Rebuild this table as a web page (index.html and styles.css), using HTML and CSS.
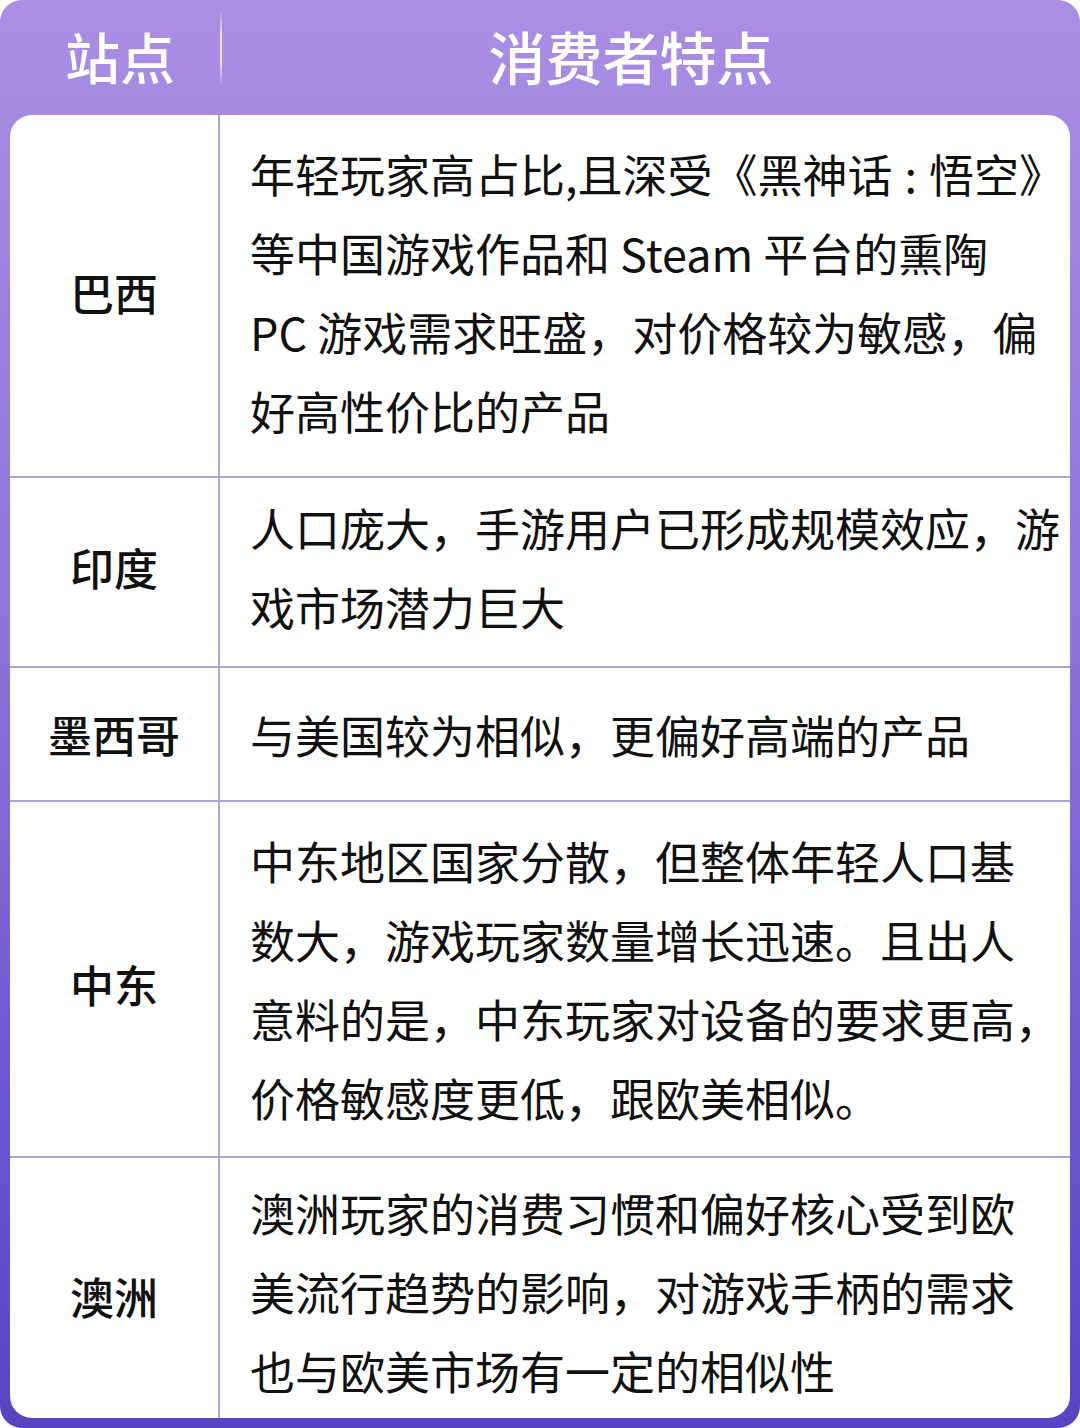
FILE: index.html
```html
<!DOCTYPE html>
<html lang="zh-CN">
<head>
<meta charset="utf-8">
<link rel="stylesheet" href="styles.css">
</head>
<body>
<div class="panel">
  <div class="head">
    <div class="head-site">站点</div>
    <div class="head-sep"></div>
    <div class="head-desc">消费者特点</div>
  </div>
  <div class="card">
    <div class="row r1">
      <div class="site">巴西</div>
      <div class="desc">
        <span class="ln">年轻玩家高占比,且深受《黑神话<span class="colon">:</span>悟空》</span>
        <span class="ln">等中国游戏作品和 Steam 平台的熏陶</span>
        <span class="ln">PC 游戏需求旺盛，对价格较为敏感，偏</span>
        <span class="ln">好高性价比的产品</span>
      </div>
    </div>
    <div class="row r2">
      <div class="site">印度</div>
      <div class="desc">
        <span class="ln">人口庞大，手游用户已形成规模效应，游</span>
        <span class="ln">戏市场潜力巨大</span>
      </div>
    </div>
    <div class="row r3">
      <div class="site">墨西哥</div>
      <div class="desc">
        <span class="ln">与美国较为相似，更偏好高端的产品</span>
      </div>
    </div>
    <div class="row r4">
      <div class="site">中东</div>
      <div class="desc">
        <span class="ln">中东地区国家分散，但整体年轻人口基</span>
        <span class="ln">数大，游戏玩家数量增长迅速。且出人</span>
        <span class="ln">意料的是，中东玩家对设备的要求更高，</span>
        <span class="ln">价格敏感度更低，跟欧美相似。</span>
      </div>
    </div>
    <div class="row r5">
      <div class="site">澳洲</div>
      <div class="desc">
        <span class="ln">澳洲玩家的消费习惯和偏好核心受到欧</span>
        <span class="ln">美流行趋势的影响，对游戏手柄的需求</span>
        <span class="ln">也与欧美市场有一定的相似性</span>
      </div>
    </div>
  </div>
</div>
</body>
</html>
```

FILE: styles.css
```css
html, body {
  margin: 0;
  padding: 0;
  background: #ffffff;
}
body {
  width: 1080px;
  height: 1428px;
  overflow: hidden;
  font-family: "Noto Sans CJK SC", "Noto Sans", sans-serif;
}
.panel {
  width: 1080px;
  height: 1428px;
  box-sizing: border-box;
  border-radius: 22px;
  background: linear-gradient(180deg, #aa8ee3 0%, #a489e2 10%, #8d73da 45%, #6f58cf 75%, #5644c2 100%);
  padding: 0 10px 10px 10px;
  display: flex;
  flex-direction: column;
}
.head {
  height: 115px;
  display: flex;
  align-items: center;
  color: #ffffff;
  font-weight: 500;
}
.head-site {
  width: 210px;
  text-align: center;
  font-size: 55px;
  line-height: 1;
  padding-bottom: 4px;
  padding-left: 10px;
  box-sizing: border-box;
}
.head-sep {
  width: 2px;
  height: 76px;
  margin-top: -20px;
  background: linear-gradient(180deg, rgba(255,255,255,0) 0%, rgba(255,255,255,0.75) 30%, rgba(255,255,255,0.75) 70%, rgba(255,255,255,0) 100%);
}
.head-desc {
  flex: 1;
  text-align: center;
  font-size: 57px;
  line-height: 1;
  padding-bottom: 4px;
  padding-right: 30px;
}
.card {
  flex: 1;
  background: #ffffff;
  border-radius: 22px;
  overflow: hidden;
  display: flex;
  flex-direction: column;
}
.row {
  display: grid;
  grid-template-columns: 210px 1fr;
  border-bottom: 2px solid #aba3dd;
  box-sizing: border-box;
}
.row:last-child {
  border-bottom: none;
}
.r1 { height: 363px; }
.r2 { height: 190px; }
.r3 { height: 134px; }
.r4 { height: 356px; }
.r5 { flex: 1; }
.site {
  border-right: 2px solid #aca8d4;
  display: flex;
  align-items: center;
  justify-content: center;
  font-size: 44px;
  font-weight: 500;
  color: #111111;
}
.r1 .site { padding-bottom: 8px; }
.r2 .site { padding-bottom: 10px; }
.r4 .site { padding-top: 10px; }
.r5 .site { padding-top: 16px; }
.desc {
  display: flex;
  flex-direction: column;
  justify-content: center;
  padding-left: 30px;
  padding-right: 4px;
  font-size: 45px;
  line-height: 79px;
  color: #111111;
  white-space: nowrap;
  min-width: 0;
}
.r1 .desc { padding-bottom: 8px; }
.r2 .desc { padding-bottom: 10px; }
.r5 .desc { padding-top: 6px; }
.ln {
  display: block;
}
.colon {
  margin: 0 12px;
}
```
